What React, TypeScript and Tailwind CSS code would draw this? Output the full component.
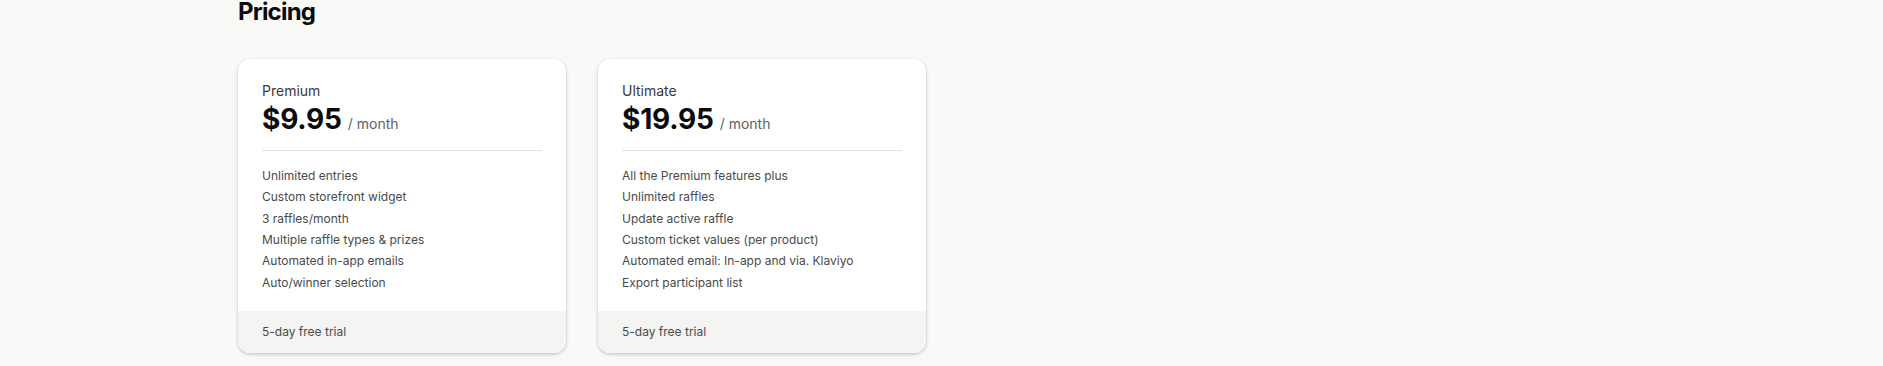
const plans = [
    {
        name: 'Premium',
        price: '$9.95',
        features: [
            'Unlimited entries',
            'Custom storefront widget',
            '3 raffles/month',
            'Multiple raffle types & prizes',
            'Automated in-app emails',
            'Auto/winner selection',
        ],
    },
    {
        name: 'Ultimate',
        price: '$19.95',
        features: [
            'All the Premium features plus',
            'Unlimited raffles',
            'Update active raffle',
            'Custom ticket values (per product)',
            'Automated email: In-app and via. Klaviyo',
            'Export participant list',
        ],
    },
]

const PlanCard = ({ plan }: { plan: (typeof plans)[number] }) => {
    return (
        <div className="w-[328px] bg-white rounded-xl overflow-hidden shadow-[0_1px_3px_rgba(0,0,0,0.2),0_2px_6px_rgba(0,0,0,0.06)]">
            <div className="px-6 pt-5 pb-[18px]">
                <p className="text-[14px] leading-6 text-[#3a3a3a]">{plan.name}</p>
                <div className="flex items-baseline gap-[6px] h-8">
                    <span className="text-[28px] leading-8 font-bold text-[#0b0b0b] tracking-[-0.2px]">{plan.price}</span>
                    <span className="text-[14px] leading-5 text-[#616161]">/ month</span>
                </div>
                <div className="mt-[15px] h-px bg-[#e3e3e3]" />
                <ul className="mt-[14px] text-[12px] leading-[21.33px] text-[#4a4a4a]">
                    {plan.features.map((f) => (
                        <li key={f}>{f}</li>
                    ))}
                </ul>
            </div>
            <div className="bg-[#f4f4f3] px-6 py-[11px] text-[12px] leading-5 text-[#4a4a4a]">
                5-day free trial
            </div>
        </div>
    )
}

const App = () => {
    return (
        <div className="min-h-[366px] bg-[#f9f9f8] px-[238px] font-['Inter',sans-serif]">
            <h2 className="text-[24px] leading-none font-bold tracking-[-0.8px] text-[#0b0b0b]">Pricing</h2>
            <div className="mt-[35px] flex gap-8">
                {plans.map((p) => (
                    <PlanCard key={p.name} plan={p} />
                ))}
            </div>
        </div>
    )
}

export default App
